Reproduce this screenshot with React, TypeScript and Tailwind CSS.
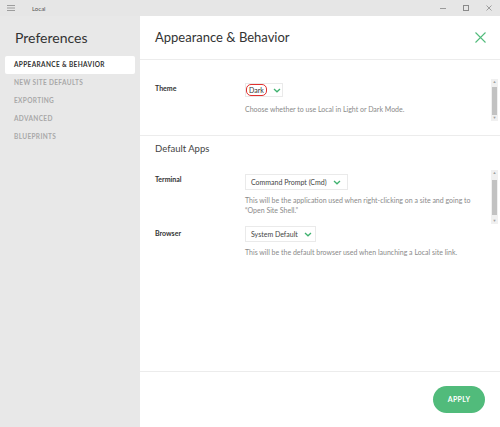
import React from 'react';

const font = { fontFamily: 'Lato, "Noto Sans", sans-serif' };

function Chevron() {
  return (
    <svg width="8" height="5" viewBox="0 0 8 5" className="ml-[6px]">
      <path d="M1 1 L4 3.8 L7 1" fill="none" stroke="#3fb26f" strokeWidth="1.3" />
    </svg>
  );
}

function Scrollbar({ height, thumbTop, thumbHeight }: { height: number; thumbTop: number; thumbHeight: number }) {
  return (
    <div className="relative w-[7px] bg-[#f0f0f0]" style={{ height }}>
      <div className="absolute left-0 top-0 w-full text-center text-[4px] leading-[6px] text-[#a0a0a0]">▲</div>
      <div className="absolute left-[1px] w-[5px] bg-[#c2c2c2]" style={{ top: thumbTop, height: thumbHeight }} />
      <div className="absolute bottom-0 left-0 w-full text-center text-[4px] leading-[6px] text-[#a0a0a0]">▼</div>
    </div>
  );
}

const navItems = ['Appearance & Behavior', 'New Site Defaults', 'Exporting', 'Advanced', 'Blueprints'];

export default function App() {
  return (
    <div className="flex h-[427px] w-[500px] flex-col bg-[#e8e8e8]" style={font}>
      {/* Title bar */}
      <div className="flex h-[16px] items-center bg-[#e6e6e6] pl-[7px]">
        <svg width="8" height="6" viewBox="0 0 8 6">
          <path d="M0 0.5 H8 M0 3 H8 M0 5.5 H8" stroke="#8a8a8a" strokeWidth="0.8" />
        </svg>
        <span className="ml-[17px] text-[6px] text-[#555]">Local</span>
        <div className="ml-auto flex items-center">
          <div className="flex w-[23px] justify-center">
            <div className="h-[1px] w-[6px] bg-[#9a9a9a]" />
          </div>
          <div className="flex w-[23px] justify-center">
            <div className="h-[6px] w-[6px] border border-[#8a8a8a]" />
          </div>
          <div className="flex w-[23px] justify-center">
            <svg width="6" height="6" viewBox="0 0 6 6">
              <path d="M0.5 0.5 L5.5 5.5 M5.5 0.5 L0.5 5.5" stroke="#8a8a8a" strokeWidth="0.8" />
            </svg>
          </div>
        </div>
      </div>

      <div className="flex flex-1">
        {/* Sidebar */}
        <div className="w-[140px] px-[5px]">
          <div className="pl-[10px] pt-[14px] text-[14px] leading-[16px] text-[#333]">Preferences</div>
          <div className="mt-[10px] flex flex-col">
            {navItems.map((item, i) => (
              <div
                key={item}
                className={`flex h-[18px] items-center pl-[9px] text-[6.5px] font-bold uppercase tracking-[0.35px] ${
                  i === 0 ? 'rounded-[2px] bg-white text-[#333]' : 'text-[#a8a8a8]'
                }`}
              >
                {item}
              </div>
            ))}
          </div>
        </div>

        {/* Main */}
        <div className="flex flex-1 flex-col bg-white">
          <div className="flex h-[44px] items-center justify-between border-b border-[#ececec] pl-[15px] pr-[14px]">
            <span className="text-[13px] text-[#333]">Appearance &amp; Behavior</span>
            <svg width="11" height="11" viewBox="0 0 11 11">
              <path d="M0.5 0.5 L10.5 10.5 M10.5 0.5 L0.5 10.5" stroke="#51bb7b" strokeWidth="1.1" />
            </svg>
          </div>

          {/* Theme */}
          <div className="flex h-[76px] border-b border-[#ececec] pl-[15px] pr-[2px] pt-[19px]">
            <div className="w-[90px] pt-[4px] text-[7px] font-bold text-[#333]">Theme</div>
            <div className="flex-1 pt-[4px]">
              <div className="flex h-[14px] w-[38px] items-center border border-[#eaeaea]">
                <span className="rounded-[5px] border border-[#e0302f] px-[2px] text-[7px] leading-[10px] text-[#333]">Dark</span>
                <Chevron />
              </div>
              <div className="mt-[7px] text-[7px] text-[#8a8a8a]">Choose whether to use Local in Light or Dark Mode.</div>
            </div>
            <Scrollbar height={42} thumbTop={8} thumbHeight={28} />
          </div>

          {/* Default Apps */}
          <div className="flex h-[236px] flex-col border-b border-[#ececec] pl-[15px] pr-[2px]">
            <div className="pt-[6px] text-[9.5px] text-[#444]">Default Apps</div>
            <div className="mt-[14px] flex">
              <div className="w-[90px] pt-[4px] text-[7px] font-bold text-[#333]">Terminal</div>
              <div className="flex-1 pt-[4px]">
                <div className="flex h-[16px] w-[103px] items-center border border-[#eaeaea] pl-[5px]">
                  <span className="text-[7px] text-[#444]">Command Prompt (Cmd)</span>
                  <Chevron />
                </div>
                <div className="mt-[5px] text-[7px] leading-[10px] text-[#8a8a8a]">
                  This will be the application used when right-clicking on a site and going to
                  <br />
                  “Open Site Shell.”
                </div>
                <div className="mt-[11px] flex">
                  <div className="-ml-[90px] w-[90px] pt-[2px] text-[7px] font-bold text-[#333]">Browser</div>
                  <div className="flex h-[16px] w-[71px] items-center border border-[#eaeaea] pl-[5px]">
                    <span className="text-[7px] text-[#444]">System Default</span>
                    <Chevron />
                  </div>
                </div>
                <div className="mt-[5px] text-[7px] leading-[10px] text-[#8a8a8a]">
                  This will be the default browser used when launching a Local site link.
                </div>
              </div>
              <Scrollbar height={54} thumbTop={10} thumbHeight={35} />
            </div>
          </div>

          {/* Footer */}
          <div className="flex flex-1 items-center justify-end pr-[15px]">
            <button className="h-[27px] w-[52px] rounded-full bg-[#51bb7b] text-[7px] font-bold tracking-[0.3px] text-white">
              APPLY
            </button>
          </div>
        </div>
      </div>
    </div>
  );
}
